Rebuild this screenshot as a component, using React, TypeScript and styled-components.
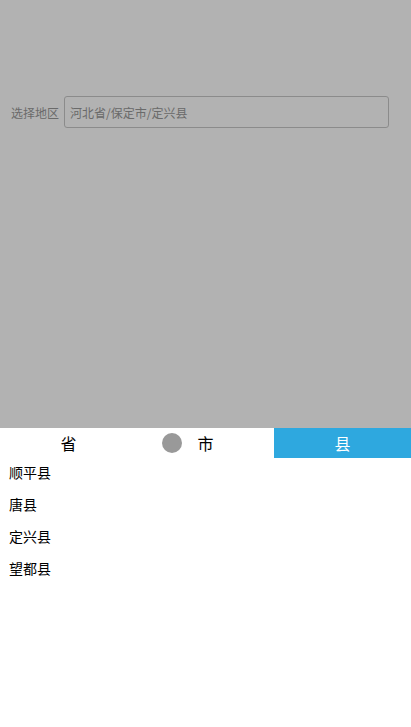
import * as React from 'react'
import styled, { createGlobalStyle } from 'styled-components'

const GlobalStyle = createGlobalStyle`
  html, body {
    margin: 0;
    padding: 0;
    background: #fff;
    font-family: "Noto Sans CJK SC", "Noto Sans", sans-serif;
  }
`

const Page = styled.div`
  min-height: 727px;
  padding: 96px 22px 0 11px;
  box-sizing: border-box;
`

const FieldRow = styled.div`
  display: flex;
  align-items: center;
`

const Label = styled.label`
  font-size: 12px;
  color: #999;
  margin-right: 5px;
  white-space: nowrap;
`

const Input = styled.input`
  flex: 1;
  height: 32px;
  box-sizing: border-box;
  border: 1px solid #c8c8c8;
  border-radius: 3px;
  padding: 0 5px;
  font-size: 12px;
  font-family: inherit;
  color: #999;
  background: #fff;
  outline: none;
`

const Mask = styled.div`
  position: fixed;
  inset: 0;
  background: rgba(0, 0, 0, 0.3);
`

const Sheet = styled.div`
  position: fixed;
  left: 0;
  right: 0;
  bottom: 0;
  height: 299px;
  background: #fff;
`

const Tabs = styled.div`
  position: relative;
  display: grid;
  grid-template-columns: repeat(3, 1fr);
  height: 30px;
`

const Tab = styled.div<{ $active?: boolean }>`
  display: flex;
  align-items: center;
  justify-content: center;
  font-size: 16px;
  color: ${({ $active }) => ($active ? '#fff' : '#000')};
  background: ${({ $active }) => ($active ? '#2ea8df' : '#fff')};
`

const Dot = styled.span`
  position: absolute;
  left: 162px;
  top: 5px;
  width: 20px;
  height: 20px;
  border-radius: 50%;
  background: #999;
`

const List = styled.ul`
  list-style: none;
  margin: 0;
  padding: 0;
`

const Item = styled.li`
  height: 32px;
  line-height: 28px;
  padding-left: 9px;
  font-size: 14px;
  color: #000;
`

const tabs = ['省', '市', '县']
const counties = ['顺平县', '唐县', '定兴县', '望都县']

export default function App() {
  return (
    <>
      <GlobalStyle />
      <Page>
        <FieldRow>
          <Label>选择地区</Label>
          <Input readOnly value="河北省/保定市/定兴县" />
        </FieldRow>
      </Page>
      <Mask />
      <Sheet>
        <Tabs>
          {tabs.map((t, i) => (
            <Tab key={t} $active={i === 2}>
              {t}
            </Tab>
          ))}
          <Dot />
        </Tabs>
        <List>
          {counties.map(c => (
            <Item key={c}>{c}</Item>
          ))}
        </List>
      </Sheet>
    </>
  )
}
